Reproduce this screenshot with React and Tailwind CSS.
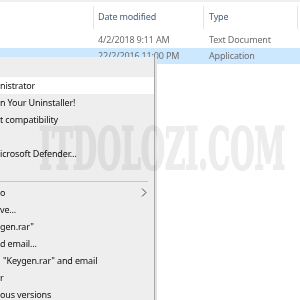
import React from "react";

const items = [
  { t: "" },
  { t: "nistrator", hover: true },
  { t: "n Your Uninstaller!" },
  { t: "t compatibility" },
  { t: "" },
  { t: "icrosoft Defender..." },
  { t: "" },
  { sep: true },
  { t: "o", chevron: true },
  { t: "ve..." },
  { t: "gen.rar\"" },
  { t: "d email..." },
  { t: "\"Keygen.rar\" and email", pl: true },
  { t: "r" },
  { t: "ous versions" },
];

export default function App() {
  return (
    <div
      className="relative w-[300px] h-[300px] overflow-hidden bg-white tracking-[-0.15px]"
      style={{ fontFamily: '"Noto Sans", "Liberation Sans", sans-serif' }}
    >
      <div className="h-[2px] bg-[#f0f0f0]" />
      {/* header */}
      <div className="flex h-[30px] items-center text-[9px] text-[#4c607a]">
        <div className="w-[94px] h-[23px] border-r border-[#e5e5e5]" />
        <div className="w-[110px] h-[23px] border-r border-[#e5e5e5] pl-[4px] flex items-center">
          Date modified
        </div>
        <div className="w-[94px] h-[23px] border-r border-[#e5e5e5] pl-[5px] flex items-center">
          Type
        </div>
      </div>
      {/* rows */}
      <div className="flex h-[16px] items-center text-[9px] text-[#6d6d6d]">
        <div className="w-[98px]" />
        <div className="w-[111px]">4/2/2018 9:11 AM</div>
        <div>Text Document</div>
      </div>
      <div className="flex h-[16px] items-center text-[9px] text-[#6d6d6d] bg-[#cce8ff]">
        <div className="w-[98px]" />
        <div className="w-[111px]">22/2/2016 11:00 PM</div>
        <div>Application</div>
      </div>

      {/* context menu */}
      <div className="absolute left-0 top-[57px] w-[157px] h-[260px] flex">
        <div className="w-[155px] bg-[#eeeeee] border-r border-[#a8a8a8] pt-[3px] text-[9px] text-[#111]">
          {items.map((it, i) =>
            it.sep ? (
              <div key={i} className="h-[5px] flex items-center pr-[6px]">
                <div className="h-px w-full bg-[#c6c6c6]" />
              </div>
            ) : (
              <div
                key={i}
                className={
                  "h-[17px] flex items-center justify-between whitespace-nowrap " +
                  (it.hover ? "bg-white " : "") +
                  (it.pl ? "pl-[3px]" : "pl-0")
                }
              >
                <span>{it.t}</span>
                {it.chevron && (
                  <svg width="6" height="9" viewBox="0 0 6 9" className="mr-[7px]">
                    <path d="M1 0.5 L5 4.5 L1 8.5" fill="none" stroke="#444" strokeWidth="1" />
                  </svg>
                )}
              </div>
            )
          )}
        </div>
        <div className="w-[2px] bg-[#e2e2e2]" />
      </div>

      {/* watermark */}
      <div className="absolute left-[39px] top-[120px] pointer-events-none mix-blend-multiply">
        <span
          className="inline-block origin-left scale-x-[0.48] text-[58px] leading-none font-bold tracking-normal text-[#ededed] [-webkit-text-stroke:2px_#ededed] whitespace-nowrap"
          style={{ fontFamily: '"DejaVu Serif", serif' }}
        >
          ITDOLOZI.COM
        </span>
      </div>
    </div>
  );
}
